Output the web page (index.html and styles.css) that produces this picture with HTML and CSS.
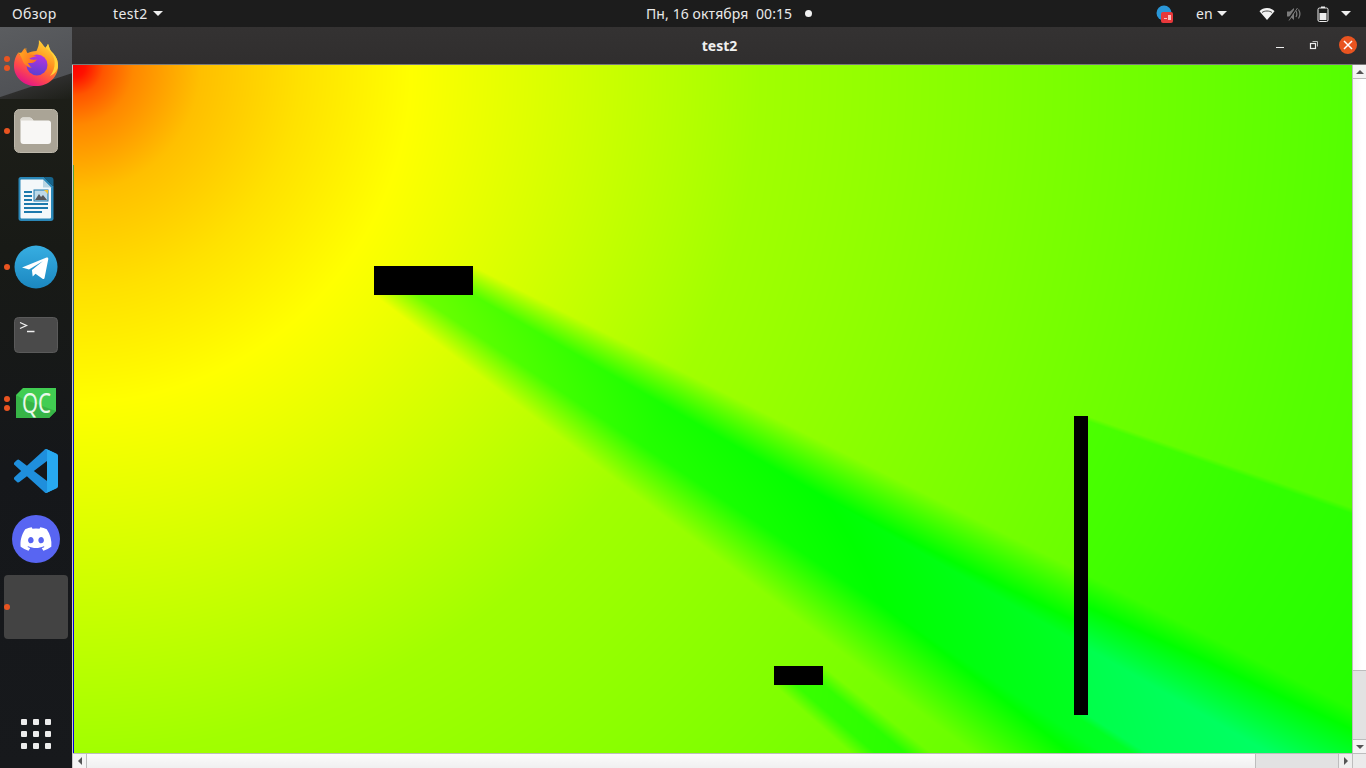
FILE: index.html
```html
<!DOCTYPE html>
<html lang="ru">
<head>
<meta charset="utf-8">
<title>test2</title>
<link rel="stylesheet" href="styles.css">
</head>
<body>
<header class="topbar">
  <span class="overview">Обзор</span>
  <span class="app">test2<i class="caret"></i></span>
  <span class="clock">Пн, 16 октября&nbsp;&nbsp;00:15</span>
  <i class="notify"></i>
  <span class="tray">
    <svg class="tray-app" viewBox="0 0 18 18" width="18" height="18"><circle cx="8" cy="8" r="7.5" fill="#2a97d8"/><rect x="5" y="7" width="12" height="11" rx="2" fill="#e8383b"/><rect x="8" y="13" width="3" height="1" fill="#f9c0c0"/><rect x="12" y="10" width="3" height="5" fill="#f9c0c0"/></svg>
    <span class="lang">en</span><i class="caret"></i>
    <svg class="tray-wifi" viewBox="0 0 16 14" width="16" height="14"><path d="M0.5 4.2C2.5 2 5 1 8 1s5.500 1 7.500 3.200L8 13z" fill="#f2f2f2"/><path d="M3 5.500C4.300 4.500 6 4 8 4s3.700.5 5 1.500" fill="none" stroke="#1c1c1c" stroke-width="0.8"/></svg>
    <svg class="tray-vol" viewBox="0 0 16 16" width="16" height="16"><path d="M1 5.500h3L8 2v12l-4-3.500H1z" fill="#7c7c7c"/><path d="M10 5c1 1.800 1 4.200 0 6M12.500 3.500c1.700 2.700 1.700 6.300 0 9" fill="none" stroke="#7c7c7c" stroke-width="1.200"/><path d="M2 14L11 1" stroke="#1c1c1c" stroke-width="1.500"/><path d="M3 14.500L11.500 2" stroke="#7c7c7c" stroke-width="1"/></svg>
    <svg class="tray-bat" viewBox="0 0 12 16" width="12" height="16"><path d="M4 .5h4v1.500H4z" fill="#eee"/><rect x="1" y="2" width="10" height="13.500" rx="1.500" fill="none" stroke="#eee" stroke-width="1"/><rect x="2.500" y="7" width="7" height="7" fill="#eee"/></svg>
    <i class="caret caret-last"></i>
  </span>
</header>
<div class="desk">
  <nav class="dock">
    <div class="dock-item">
      <span class="dots"><i></i><i></i></span>
      <svg class="ico" viewBox="0 0 48 48" width="46" height="46">
        <defs>
          <linearGradient id="ffa" x1="0.8" y1="0.05" x2="0.3" y2="0.98"><stop offset="0" stop-color="#ffd83a"/><stop offset="0.42" stop-color="#ff8f1f"/><stop offset="0.72" stop-color="#ff4a4a"/><stop offset="1" stop-color="#e31587"/></linearGradient>
          <linearGradient id="ffb" x1="0.6" y1="0" x2="0.4" y2="1"><stop offset="0" stop-color="#b833e1"/><stop offset="1" stop-color="#5b3fcf"/></linearGradient>
          <linearGradient id="ffc" x1="0" y1="0" x2="1" y2="0.6"><stop offset="0" stop-color="#ffb21f"/><stop offset="1" stop-color="#ff6a22"/></linearGradient>
        </defs>
        <path d="M27 0c3.500 3.500 4.500 6 7 8 1-1 2-2 2.500-4 1.500 4 1.500 6 4 8.500C45 17 47 21 47 27c0 11.500-10 21-23 21S1 38.500 1 27c0-5 1.500-10 4.500-14 .5 1.200 1.200 2.300 2 3 1-3 3-6 5.500-8-.5 2.500 0 4.500 1.500 6 3-1.500 6-2.500 10-2.500C26 8 27.500 5 27 0z" fill="url(#ffa)"/>
        <path d="M27 0c3.500 3.500 4.500 6 7 8 6 4 9.500 9.500 9.500 16 0 5-1.500 9.500-5 13.500 5.500-2.500 8.500-7 8.500-10.500 0-6-2-10-6.500-14.500-2.500-2.500-2.500-4.500-4-8.500-.5 2-1.500 3-2.500 4-2.500-2-3.500-4.500-7-8z" fill="#ffd23a"/>
        <circle cx="25" cy="26" r="11" fill="url(#ffb)"/>
        <path d="M5.500 13c3 .5 6 .5 8.500-5-.5 2.500 0 4.500 1.500 6 3 1.200 6 1.500 9 3-2.500 1-5.500 1-7.500 2.500 2.500 1.500 5 1.500 8 .5-1.500 3.500-5.500 4.500-9.500 4 1 1.500 2 3 4 5-4.500-.5-8-3.500-9.500-7.500-.8-3-2.500-5.500-4.500-8.500z" fill="url(#ffc)"/>
      </svg>
    </div>
    <div class="dock-item">
      <span class="dots"><i></i></span>
      <svg class="ico" viewBox="0 0 44 44" width="44" height="44">
        <rect x="0.500" y="0.500" width="43" height="43" rx="5" fill="#aaa496" stroke="#bdb8ab"/>
        <path d="M6.500 11c0-1.500 1-2.500 2.500-2.500h6.500c1.500 0 2.500 1 4 3h15c1.500 0 2.500 1 2.500 2.500v18c0 2-1 3-3 3H9.500c-2 0-3-1-3-3z" fill="#f8f7f5"/>
        <path d="M6.500 11c0-1.500 1-2.500 2.500-2.500h6.500c1.500 0 2.500 1 4 3H6.500z" fill="#dcd9d2"/>
      </svg>
    </div>
    <div class="dock-item">
      <svg class="ico" viewBox="0 0 36 46" width="36" height="46">
        <path d="M2.500 1h23.500l9.500 9.500v32c0 1.500-1 2.500-2.500 2.500H3C1.500 45 .5 44 .5 42.500V3C.5 2 1.500 1 2.500 1z" fill="#2a87b7"/>
        <path d="M3 3.500h22l8 8V41c0 1-.5 1.500-1.500 1.500H4c-1 0-1.500-.5-1.500-1.500V4z" fill="#f4f8fa"/>
        <path d="M26 1l9.500 9.500V4c0-2-1-3-3-3z" fill="#17648c"/>
        <path d="M25 3.500l8 8h-8z" fill="#b9d5e3"/>
        <path d="M6 15h8v2H6zM6 19h8v2H6zM6 23h8v2H6zM6 27h24v2H6zM6 31h24v2H6zM6 35h18v2H6z" fill="#1d79ac"/>
        <rect x="16" y="14" width="14" height="11" fill="#bcd9e8" stroke="#1d79ac"/>
        <path d="M17 24l4-6 2 3 2-2 4 5z" fill="#55575a"/>
        <path d="M26 14h4v4z" fill="#f0c331"/>
      </svg>
    </div>
    <div class="dock-item">
      <span class="dots"><i></i></span>
      <svg class="ico" viewBox="0 0 44 44" width="44" height="44">
        <defs><linearGradient id="tg" x1="0.5" y1="0" x2="0.5" y2="1"><stop offset="0" stop-color="#37aee2"/><stop offset="1" stop-color="#1b87c0"/></linearGradient></defs>
        <circle cx="22" cy="22" r="21.500" fill="url(#tg)"/>
        <path d="M8 22.500L32.500 12.500c1-.4 2 .2 1.800 1.500l-3.700 18.800c-.2 1.200-1.200 1.500-2.100.9L21.500 28.700l-2.800 2.700-.8-6.400L29 16 15 24.500z" fill="#fff"/>
      </svg>
    </div>
    <div class="dock-item">
      <svg class="ico" viewBox="0 0 44 36" width="44" height="36">
        <rect x="0.500" y="0.500" width="43" height="35" rx="4" fill="#4a4a4a" stroke="#5a5a5a"/>
        <path d="M6 5.500l6.500 3-6.500 3" fill="none" stroke="#f0f0f0" stroke-width="1.300"/>
        <path d="M13 14.500h7.500" stroke="#f0f0f0" stroke-width="1.500"/>
      </svg>
    </div>
    <div class="dock-item">
      <span class="dots"><i></i><i></i></span>
      <svg class="ico" viewBox="0 0 40 30" width="40" height="30">
        <path d="M7 0H40V23L33 30H0V7z" fill="#41cd52"/>
        <path d="M7 11L40 23L33 30H0V7z" fill="#37b547"/>
        <text x="6" y="25" class="qc" textLength="29" lengthAdjust="spacingAndGlyphs">QC</text>
      </svg>
    </div>
    <div class="dock-item">
      <svg class="ico" viewBox="0 0 24 24" width="44" height="44">
        <path d="M23.150 2.587L18.210.21a1.494 1.494 0 0 0-1.705.29l-9.460 8.630-4.120-3.128a.999.999 0 0 0-1.276.057L.327 7.261A1 1 0 0 0 .326 8.740L3.899 12 .326 15.260a1 1 0 0 0 .001 1.479L1.650 17.940a.999.999 0 0 0 1.276.057l4.120-3.128 9.460 8.630a1.492 1.492 0 0 0 1.704.29l4.942-2.377A1.500 1.500 0 0 0 24 20.060V3.939a1.500 1.500 0 0 0-.85-1.352zm-5.146 14.861L10.826 12l7.178-5.448v10.896z" fill="#1f8fdc"/>
        <path d="M16.505.5a1.494 1.494 0 0 1 1.705-.29l4.940 2.377A1.500 1.500 0 0 1 24 3.939V20.060a1.500 1.500 0 0 1-.85 1.352l-4.940 2.377a1.492 1.492 0 0 1-1.705-.29c.6.6 1.500.2 1.500-.6V1.100c0-.8-.9-1.200-1.500-.6z" fill="#28a9f0"/>
      </svg>
    </div>
    <div class="dock-item">
      <svg class="ico" viewBox="0 0 48 48" width="48" height="48">
        <circle cx="24" cy="24" r="24" fill="#5865f2"/>
        <g transform="translate(8.500 8.500) scale(1.290)">
          <path d="M20.317 4.370a19.791 19.791 0 0 0-4.885-1.515.074.074 0 0 0-.079.037c-.21.375-.444.864-.608 1.250a18.270 18.270 0 0 0-5.487 0 12.640 12.640 0 0 0-.617-1.250.077.077 0 0 0-.079-.037A19.736 19.736 0 0 0 3.677 4.370a.070.070 0 0 0-.032.027C.533 9.046-.32 13.580.099 18.057a.082.082 0 0 0 .031.057 19.900 19.900 0 0 0 5.993 3.030.078.078 0 0 0 .084-.028 14.090 14.090 0 0 0 1.226-1.994.076.076 0 0 0-.041-.106 13.107 13.107 0 0 1-1.872-.892.077.077 0 0 1-.008-.128 10.200 10.200 0 0 0 .372-.292.074.074 0 0 1 .077-.01c3.928 1.793 8.180 1.793 12.062 0a.074.074 0 0 1 .078.01c.12.098.246.198.373.292a.077.077 0 0 1-.006.127 12.299 12.299 0 0 1-1.873.892.077.077 0 0 0-.041.107c.36.698.772 1.362 1.225 1.993a.076.076 0 0 0 .084.028 19.839 19.839 0 0 0 6.002-3.030.077.077 0 0 0 .032-.054c.5-5.177-.838-9.674-3.549-13.660a.061.061 0 0 0-.031-.03zM8.020 15.330c-1.183 0-2.157-1.085-2.157-2.419 0-1.333.956-2.419 2.157-2.419 1.210 0 2.176 1.096 2.157 2.420 0 1.333-.956 2.418-2.157 2.418zm7.975 0c-1.183 0-2.157-1.085-2.157-2.419 0-1.333.955-2.419 2.157-2.419 1.210 0 2.176 1.096 2.157 2.420 0 1.333-.946 2.418-2.157 2.418z" fill="#fff"/>
        </g>
      </svg>
    </div>
    <div class="dock-item">
      <span class="dots"><i></i></span>
      <span class="tile"></span>
    </div>
    <div class="apps-grid"><i></i><i></i><i></i><i></i><i></i><i></i><i></i><i></i><i></i></div>
  </nav>
  <main class="window">
    <div class="titlebar">
      <span class="title">test2</span>
      <span class="controls">
        <svg viewBox="0 0 10 10" width="10" height="10"><path d="M1 7.500h8" stroke="#eee" stroke-width="1"/></svg>
        <svg viewBox="0 0 10 10" width="10" height="10"><path d="M3.500 1.500h5v5" fill="none" stroke="#bbb" stroke-width="1"/><rect x="1.500" y="3.500" width="5" height="5" fill="none" stroke="#eee" stroke-width="1.200"/></svg>
        <span class="close"><svg viewBox="0 0 10 10" width="10" height="10"><path d="M1 1l8 8M9 1L1 9" stroke="#fff" stroke-width="1.500"/></svg></span>
      </span>
    </div>
    <div class="client">
      <canvas id="heat" class="heat" width="1279" height="688"></canvas>
      <div class="vbar">
        <span class="btn"><i class="arrow up"></i></span>
        <span class="vthumb"></span>
        <span class="track"></span>
        <span class="btn btn-down"><i class="arrow down"></i></span>
      </div>
      <div class="hbar">
        <span class="btn hbtn"><i class="arrow left"></i></span>
        <span class="hthumb"></span>
        <span class="track"></span>
        <span class="btn hbtn hbtn-right"><i class="arrow right"></i></span>
      </div>
      <div class="corner"></div>
    </div>
  </main>
</div>
<script src="app.js"></script>
</body>
</html>
```
FILE: styles.css
```css
* { box-sizing: border-box; }
html, body { margin: 0; height: 100%; overflow: hidden; }
body {
  display: flex;
  flex-direction: column;
  width: 1366px;
  height: 768px;
  background: #111;
  font-family: "Noto Sans", "Liberation Sans", sans-serif;
}
i { display: block; }

.topbar {
  flex: 0 0 27px;
  display: flex;
  align-items: center;
  background: #1c1c1c;
  color: #e9e9e9;
  font-size: 14px;
  line-height: 27px;
}
.overview { margin-left: 12px; width: 101px; letter-spacing: 0.4px; }
.app { display: flex; align-items: center; gap: 5px; width: 533px; letter-spacing: 0.4px; }
.caret {
  width: 0;
  height: 0;
  border-left: 5px solid transparent;
  border-right: 5px solid transparent;
  border-top: 5px solid #eee;
}
.clock { width: 159px; white-space: nowrap; letter-spacing: 0.1px; }
.notify { width: 7px; height: 7px; border-radius: 50%; background: #f2f2f2; }
.tray { display: flex; align-items: center; margin-left: 344px; }
.tray-app { margin-right: 22px; }
.lang { width: 21px; }
.tray-wifi { margin-left: 32px; }
.tray-vol { margin-left: 11px; }
.tray-bat { margin-left: 15px; }
.caret-last { margin-left: 12px; }

.desk { flex: 1; display: flex; min-height: 0; }

.dock {
  flex: 0 0 72px;
  display: flex;
  flex-direction: column;
  padding-top: 2px;
  background:
    linear-gradient(161.6deg, #5b5d60 0, #505256 66px, #2e2e2d 67px, rgba(30,30,30,0) 100%) top left / 72px 72px no-repeat,
    linear-gradient(180deg, #1f2019 0, #181a16 30%, #15171a 60%, #17191c 100%);
}
.dock-item {
  position: relative;
  flex: 0 0 68px;
  display: flex;
  align-items: center;
  justify-content: center;
}
.dots {
  position: absolute;
  left: 4px;
  top: 0;
  height: 100%;
  display: flex;
  flex-direction: column;
  justify-content: center;
  gap: 3px;
}
.dots i { width: 6px; height: 6px; border-radius: 50%; background: #e95420; }
.tile {
  width: 64px;
  height: 64px;
  border-radius: 4px;
  background: #434343;
}
.qc { font-family: "Noto Sans", sans-serif; font-size: 27px; fill: #e9f8eb; }
.apps-grid {
  margin: auto auto 19px 21px;
  display: grid;
  grid-template-columns: repeat(3, 6px);
  gap: 6px;
}
.apps-grid i { width: 6px; height: 6px; border-radius: 1px; background: #ececec; }

.window { flex: 1; display: flex; flex-direction: column; min-width: 0; }
.titlebar {
  position: relative;
  flex: 0 0 38px;
  display: flex;
  align-items: center;
  justify-content: center;
  background: linear-gradient(180deg, #343232, #302e2e);
  border-bottom: 1px solid #7a7a7a;
  color: #f0f0f0;
  font-weight: 700;
  font-size: 14px;
}
.title { margin-left: 1px; }
.controls {
  position: absolute;
  right: 9px;
  top: 9px;
  display: flex;
  align-items: center;
  gap: 24px;
}
.close {
  width: 18px;
  height: 18px;
  border-radius: 50%;
  background: #e95420;
  display: flex;
  align-items: center;
  justify-content: center;
  margin-left: -4px;
}

.client {
  flex: 1;
  display: grid;
  grid-template-columns: 1px 1279px 14px;
  grid-template-rows: 688px 15px;
  background: #e0e0e0;
  min-height: 0;
}
.heat { grid-column: 2; grid-row: 1; display: block; width: 1279px; height: 688px; }
.client::before { content: ""; grid-column: 1; grid-row: 1 / 3; background: #c8c8c8; }

.vbar {
  grid-column: 3;
  grid-row: 1;
  display: flex;
  flex-direction: column;
  background: #e2e2e2;
  border-left: 1px solid #bdbdbd;
}
.hbar {
  grid-column: 2;
  grid-row: 2;
  display: flex;
  background: #e2e2e2;
  border-top: 1px solid #bdbdbd;
}
.corner { grid-column: 3; grid-row: 2; background: #ebebeb; border-top: 1px solid #bdbdbd; border-left: 1px solid #bdbdbd; }
.btn {
  flex: 0 0 14px;
  background: #f4f4f4;
  border-bottom: 1px solid #bdbdbd;
  display: flex;
  align-items: center;
  justify-content: center;
}
.btn-down { border-bottom: 0; border-top: 1px solid #bdbdbd; }
.hbtn { border-bottom: 0; border-right: 1px solid #bdbdbd; }
.hbtn-right { border-right: 0; border-left: 1px solid #bdbdbd; background: #eee; }
.track { flex: 1; }
.vthumb {
  flex: 0 0 592px;
  background: linear-gradient(90deg, #f6f6f6, #fff 70%);
  border-bottom: 1px solid #bdbdbd;
}
.hthumb {
  flex: 0 0 1169px;
  background: linear-gradient(180deg, #fbfbfb, #f0f0f0);
  border-right: 1px solid #bdbdbd;
}
.arrow { width: 0; height: 0; }
.arrow.up { border-left: 4px solid transparent; border-right: 4px solid transparent; border-bottom: 4px solid #555; }
.arrow.down { border-left: 4px solid transparent; border-right: 4px solid transparent; border-top: 4px solid #555; }
.arrow.left { border-top: 4px solid transparent; border-bottom: 4px solid transparent; border-right: 4px solid #555; }
.arrow.right { border-top: 4px solid transparent; border-bottom: 4px solid transparent; border-left: 4px solid #555; }
```
FILE: app.js
```js
(function () {
  var canvas = document.getElementById('heat');
  var ctx = canvas.getContext('2d');
  var W = canvas.width, H = canvas.height;
  var walls = [
    [301, 201, 400, 230],
    [701, 601, 750, 620],
    [1001, 351, 1015, 650]
  ];
  var K = 0.56;
  var table = [[0, 0], [12, 4], [30, 20], [60, 32], [127, 45], [227, 53], [330, 59.5], [686, 82], [1277, 100], [1600, 106]];

  function hueAt(r) {
    for (var i = 1; i < table.length; i++) {
      if (r <= table[i][0]) {
        var a = table[i - 1], b = table[i];
        return a[1] + (b[1] - a[1]) * (r - a[0]) / (b[0] - a[0]);
      }
    }
    return 106;
  }
  function through(x, y, w) {
    var tmin = 0, tmax = 1;
    if (x > 0) {
      var t0 = w[0] / x, t1 = w[2] / x;
      if (t0 > tmin) tmin = t0;
      if (t1 < tmax) tmax = t1;
    } else if (w[0] > 0) { return 0; }
    if (y > 0) {
      var u0 = w[1] / y, u1 = w[3] / y;
      if (u0 > tmin) tmin = u0;
      if (u1 < tmax) tmax = u1;
    } else if (w[1] > 0) { return 0; }
    return tmax > tmin ? tmax - tmin : 0;
  }
  var img = ctx.createImageData(W, H);
  var d = img.data, p = 0;
  for (var y = 0; y < H; y++) {
    for (var x = 0; x < W; x++) {
      var r = Math.sqrt(x * x + y * y);
      var len = 0;
      for (var n = 0; n < walls.length; n++) len += through(x, y, walls[n]) * r;
      var h = hueAt(r) + K * len;
      var R, G, B;
      if (h < 60) { R = 255; G = h / 60 * 255; B = 0; }
      else if (h < 120) { R = (120 - h) / 60 * 255; G = 255; B = 0; }
      else { R = 0; G = 255; B = (h - 120) / 60 * 255; }
      d[p++] = R; d[p++] = G; d[p++] = B; d[p++] = 255;
    }
  }
  ctx.putImageData(img, 0, 0);
  /* the first pixel column of the field drifts from yellow-green to blue */
  for (var j = 100; j < H; j++) {
    var t = Math.min(1, j / 400);
    ctx.fillStyle = 'rgb(' + Math.round(120 * (1 - t)) + ',' + Math.round(220 * (1 - t)) + ',' + Math.round(220 * t) + ')';
    ctx.fillRect(0, j, 1, 1);
  }
  ctx.fillStyle = '#000';
  walls.forEach(function (w) { ctx.fillRect(w[0], w[1], w[2] - w[0], w[3] - w[1]); });
})();
```
